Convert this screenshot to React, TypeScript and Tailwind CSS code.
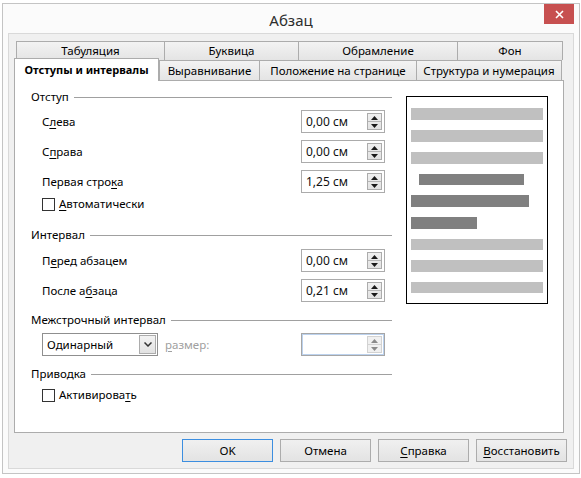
import React from 'react';

const font = { fontFamily: '"Noto Sans", "Liberation Sans", sans-serif' };

function U({ children }: { children: React.ReactNode }) {
  return <span className="underline decoration-1 underline-offset-[2px]">{children}</span>;
}

function Arrows({ disabled }: { disabled?: boolean }) {
  const fill = disabled ? '#8a8a8a' : '#1a1a1a';
  return (
    <div
      className={`flex h-[17px] w-[15px] flex-col border ${
        disabled ? 'border-[#d2d2d2] bg-[#f0f0f0]' : 'border-[#acacac] bg-linear-to-b from-[#f0f0f0] to-[#e2e2e2]'
      }`}
    >
      <div className={`flex flex-1 items-center justify-center border-b ${disabled ? 'border-[#d2d2d2]' : 'border-[#b5b5b5]'}`}>
        <svg width="7" height="4" viewBox="0 0 7 4">
          <polygon points="3.5,0 7,4 0,4" fill={fill} />
        </svg>
      </div>
      <div className="flex flex-1 items-center justify-center">
        <svg width="7" height="4" viewBox="0 0 7 4">
          <polygon points="0,0 7,0 3.5,4" fill={fill} />
        </svg>
      </div>
    </div>
  );
}

function Spin({ value, disabled }: { value?: string; disabled?: boolean }) {
  return (
    <div
      className={`flex h-[23px] w-[84px] items-center justify-between border bg-white pl-[4px] pr-[2px] ${
        disabled ? 'border-[#a6a6a6] shadow-[inset_0_0_0_1px_#bcd2ee]' : 'border-[#ababab]'
      }`}
    >
      <span className="text-[12px] text-[#111]">{value}</span>
      <Arrows disabled={disabled} />
    </div>
  );
}

function Group({ title, className = '' }: { title: string; className?: string }) {
  return (
    <div className={`flex h-[16px] items-center gap-[5px] ${className}`}>
      <span>{title}</span>
      <div className="h-px flex-1 bg-[#a0a0a0]" />
    </div>
  );
}

function Row({ label, value, className = '' }: { label: React.ReactNode; value: string; className?: string }) {
  return (
    <div className={`grid h-[23px] grid-cols-[259px_84px] items-center pl-[11px] ${className}`}>
      <span>{label}</span>
      <Spin value={value} />
    </div>
  );
}

function Check({ label, className = '' }: { label: React.ReactNode; className?: string }) {
  return (
    <div className={`flex h-[16px] items-center gap-[4px] pl-[11px] ${className}`}>
      <div className="h-[13px] w-[13px] border border-[#333] bg-white" />
      <span>{label}</span>
    </div>
  );
}

const tabBack = 'flex items-center justify-center border-l border-t border-[#acacac] bg-linear-to-b from-[#f3f3f3] to-[#e4e4e4]';

function Button({ children, primary }: { children: React.ReactNode; primary?: boolean }) {
  return (
    <div
      className={`flex h-[23px] w-[91px] items-center justify-center border bg-linear-to-b from-[#f0f0f0] to-[#e3e3e3] ${
        primary ? 'border-[#3c8ee0]' : 'border-[#acacac]'
      }`}
    >
      {children}
    </div>
  );
}

export default function App() {
  return (
    <div className="h-[478px] w-[581px] overflow-hidden bg-white pl-[2px] pt-[3px] text-[11.5px] text-black" style={font}>
      <div className="flex h-[471px] w-[578px] flex-col border border-[#c4c4c4] bg-[#fbfbfb]">
        {/* title bar */}
        <div className="grid h-[29px] grid-cols-[1fr_auto_1fr]">
          <div />
          <div className="pt-[6px] text-[15px] leading-[20px] text-[#2e2e2e]">Абзац</div>
          <div className="flex justify-end pr-[5px]">
            <div className="flex h-[20px] w-[30px] items-center justify-center bg-[#c75050]">
              <svg width="9" height="9" viewBox="0 0 9 9">
                <path d="M1 1 L8 8 M8 1 L1 8" stroke="white" strokeWidth="1.6" />
              </svg>
            </div>
          </div>
        </div>

        {/* client area */}
        <div className="mx-[5px] flex h-[436px] flex-col border border-[#d9d9d9] bg-[#f0f0f0] pl-[5px] pr-[6px] pt-[7px]">
          {/* back row of tabs */}
          <div className="mx-[2px] flex h-[19px]">
            <div className={`${tabBack} w-[148px]`}>Табуляция</div>
            <div className={`${tabBack} w-[134px]`}>Буквица</div>
            <div className={`${tabBack} w-[159px]`}>Обрамление</div>
            <div className={`${tabBack} w-[106px] border-r`}>Фон</div>
          </div>
          {/* front row of tabs */}
          <div className="-mt-[2px] flex h-[22px] items-end">
            <div className="relative z-10 -mb-px flex h-[23px] w-[145px] items-center justify-center border-l border-r border-t border-[#acacac] bg-white text-[11px] font-bold">
              Отступы и интервалы
            </div>
            <div className={`${tabBack} h-[20px] w-[100px]`}>Выравнивание</div>
            <div className={`${tabBack} h-[20px] w-[157px]`}>Положение на странице</div>
            <div className={`${tabBack} h-[20px] w-[146px] border-r`}>Структура и нумерация</div>
          </div>

          {/* panel */}
          <div className="flex h-[353px] w-[550px] items-start gap-[14px] border border-[#acacac] bg-white pl-[16px] pt-[8px]">
            <div className="flex w-[361px] flex-col">
              <Group title="Отступ" />
              <Row className="mt-[5px]" label={<>С<U>л</U>ева</>} value="0,00 см" />
              <Row className="mt-[7px]" label={<>С<U>п</U>рава</>} value="0,00 см" />
              <Row className="mt-[7px]" label={<>Первая стро<U>к</U>а</>} value="1,25 см" />
              <Check className="mt-[3px]" label={<><U>А</U>втоматически</>} />

              <Group className="mt-[15px]" title="Интервал" />
              <Row className="mt-[6px]" label={<>П<U>е</U>ред абзацем</>} value="0,00 см" />
              <Row className="mt-[7px]" label={<>После а<U>б</U>заца</>} value="0,21 см" />

              <Group className="mt-[10px]" title="Межстрочный интервал" />
              <div className="mt-[5px] grid h-[23px] grid-cols-[259px_84px] items-center pl-[11px]">
                <div className="flex items-center gap-[7px]">
                  <div className="flex h-[23px] w-[116px] items-center justify-between border border-[#8f8f8f] bg-white pl-[4px] pr-[1px]">
                    <span>Одинарный</span>
                    <div className="flex h-[19px] w-[17px] items-center justify-center border border-[#acacac] bg-linear-to-b from-[#f2f2f2] to-[#e2e2e2]">
                      <svg width="8" height="5" viewBox="0 0 8 5">
                        <path d="M0.5 0.5 L4 4 L7.5 0.5" fill="none" stroke="#333" strokeWidth="1.5" />
                      </svg>
                    </div>
                  </div>
                  <span className="text-[#a0a0a0]">
                    <U>р</U>азмер:
                  </span>
                </div>
                <Spin disabled />
              </div>

              <Group className="mt-[10px]" title="Приводка" />
              <Check className="mt-[5px]" label={<>Активирова<U>т</U>ь</>} />
            </div>

            {/* preview */}
            <div className="mt-[7px] flex h-[208px] w-[142px] flex-col justify-between border border-black px-[4px] pb-[10px] pt-[11px]">
              <div className="h-[12px] w-full bg-[#c0c0c0]" />
              <div className="h-[12px] w-full bg-[#c0c0c0]" />
              <div className="h-[12px] w-full bg-[#c0c0c0]" />
              <div className="ml-[8px] h-[11px] w-[105px] bg-[#808080]" />
              <div className="h-[12px] w-[118px] bg-[#808080]" />
              <div className="h-[12px] w-[66px] bg-[#808080]" />
              <div className="h-[11px] w-full bg-[#c0c0c0]" />
              <div className="h-[12px] w-full bg-[#c0c0c0]" />
              <div className="h-[11px] w-full bg-[#c0c0c0]" />
            </div>
          </div>

          {/* buttons */}
          <div className="mt-[6px] flex justify-end gap-[7px]">
            <Button primary>OK</Button>
            <Button>Отмена</Button>
            <Button>
              <U>С</U>правка
            </Button>
            <Button>
              <U>В</U>осстановить
            </Button>
          </div>
        </div>
      </div>
    </div>
  );
}
